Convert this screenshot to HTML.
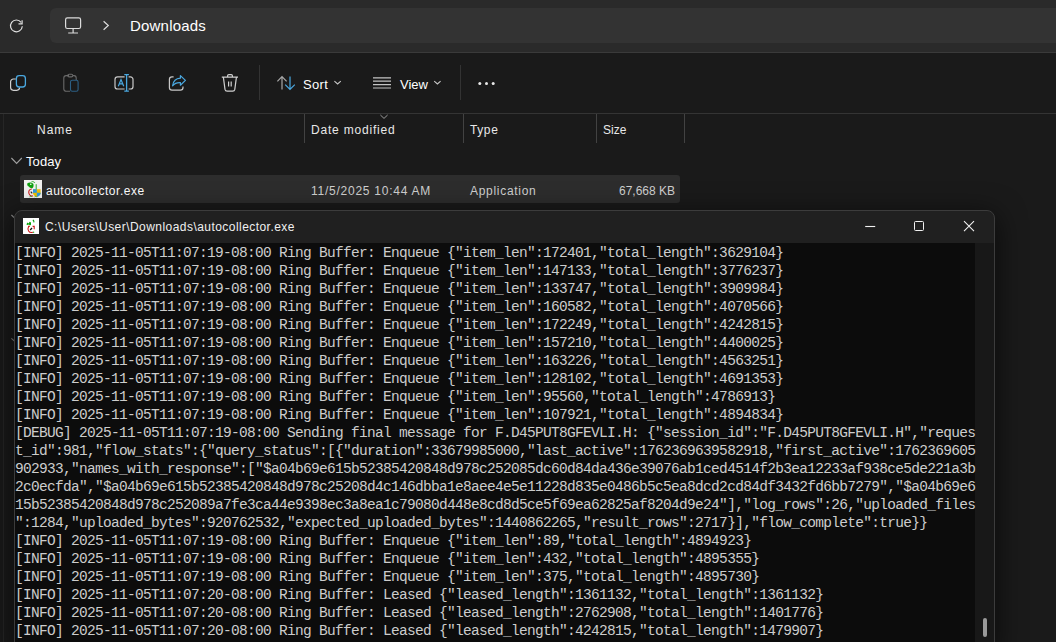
<!DOCTYPE html>
<html><head><meta charset="utf-8">
<style>
*{margin:0;padding:0;box-sizing:border-box}
html,body{width:1056px;height:642px;overflow:hidden;background:#1a1a1a;font-family:"Liberation Sans",sans-serif;color:#fff}
.a{position:absolute}
svg{position:absolute;overflow:visible}
#top{left:0;top:0;width:1056px;height:52px;background:#2a2a2a}
#addr{left:50px;top:8px;width:1020px;height:35px;background:#333333;border-radius:6px}
#topline{left:0;top:52px;width:1056px;height:1px;background:#3a3a3a}
#tb{left:0;top:53px;width:1056px;height:61px;background:#1a1a1a}
.sep{width:1px;background:#333}
.txt{white-space:pre;line-height:1}
#con{left:14px;top:210px;width:981px;height:440px;border:1px solid #3c3c3c;border-radius:8px 8px 0 0;background:#202020;box-shadow:0 6px 28px 2px rgba(0,0,0,.6)}
#cbody{left:15px;top:243px;width:960px;height:400px;background:#0c0c0c}
#cscroll{left:975px;top:243px;width:19px;height:400px;background:#181818}
#thumb{left:983px;top:618px;width:4px;height:19px;background:#9a9a9a;border-radius:2px}
#log{left:15px;top:244px;font-family:"Liberation Mono",monospace;font-size:14.5px;letter-spacing:-0.7px;line-height:18px;color:#cccccc;white-space:pre}
</style></head><body>
<div class="a" id="top"></div>
<div class="a" id="addr"></div>
<div class="a" id="topline"></div>
<div class="a" id="tb"></div>

<!-- refresh icon -->
<svg style="left:0;top:0" width="40" height="50" viewBox="0 0 40 50"><path d="M21.1 22.3 A5.9 5.9 0 1 0 22.3 26.3" fill="none" stroke="#e0e0e0" stroke-width="1.2"/><path d="M22.1 20.3 V23.9 H18.5" fill="none" stroke="#e0e0e0" stroke-width="1.2"/></svg>

<!-- monitor icon + chevron -->
<svg style="left:0;top:0" width="120" height="50" viewBox="0 0 120 50"><rect x="65.6" y="17.9" width="15" height="10.6" rx="1.8" fill="none" stroke="#dcdcdc" stroke-width="1.2"/><path d="M73.1 28.5 V32.4 M68.2 33 H78" fill="none" stroke="#dcdcdc" stroke-width="1.2"/><path d="M103.6 21.2 L108.3 25.5 L103.6 29.8" fill="none" stroke="#dcdcdc" stroke-width="1.2"/></svg>
<div class="a txt" style="left:130px;top:18px;font-size:15px;letter-spacing:0.2px;color:#fff">Downloads</div>

<!-- toolbar icons -->
<svg style="left:0;top:0" width="520" height="110" viewBox="0 0 520 110">
 <!-- copy -->
 <path d="M15.8 79 H13.4 A2.8 2.8 0 0 0 10.6 81.8 V87.6 A2.8 2.8 0 0 0 13.4 90.3 H16.8 A2.8 2.8 0 0 0 19.6 87.6" fill="none" stroke="#d0d0d0" stroke-width="1.2"/>
 <rect x="16.4" y="75.6" width="9" height="11.4" rx="2.8" fill="none" stroke="#4aa8e0" stroke-width="1.3"/>
 <!-- paste disabled -->
 <path d="M69 75.6 H66.2 A2.4 2.4 0 0 0 63.8 78 V89 A2.4 2.4 0 0 0 66.2 91.3 H70 M73 75.6 H74 A2.4 2.4 0 0 1 76.2 78 V80" fill="none" stroke="#6a6a6a" stroke-width="1.1"/>
 <rect x="67.8" y="74.3" width="5" height="2.6" rx="1.3" fill="none" stroke="#6a6a6a" stroke-width="1.1"/>
 <rect x="70.5" y="80.3" width="7.6" height="10.9" rx="1.8" fill="none" stroke="#2c5f84" stroke-width="1.1"/>
 <!-- rename -->
 <path d="M124.6 76.8 H117.6 A2.6 2.6 0 0 0 115 79.4 V86.4 A2.6 2.6 0 0 0 117.6 89 H124.6 M128.6 76.8 H130.4 A2.6 2.6 0 0 1 133 79.4 V86.4 A2.6 2.6 0 0 1 130.4 89 H128.6" fill="none" stroke="#c8c8c8" stroke-width="1.2"/>
 <path d="M118.3 86.2 L121 79.6 L123.7 86.2 M119.3 83.9 H122.7" fill="none" stroke="#4aa8e0" stroke-width="1.2"/>
 <path d="M126.6 74.6 V91.2 M124.3 74.6 H128.9 M124.3 91.2 H128.9" fill="none" stroke="#4aa8e0" stroke-width="1.3"/>
 <!-- share -->
 <path d="M173.6 76.8 H172 A2.6 2.6 0 0 0 169.4 79.4 V87.6 A2.6 2.6 0 0 0 172 90.2 H180.4 A2.6 2.6 0 0 0 183 87.6 V86.6" fill="none" stroke="#c8c8c8" stroke-width="1.2"/>
 <path d="M180.4 75.6 L185.4 80.4 L180.4 85.2 V82.6 C177 82.4 174.6 83.2 172.6 85.8 C173.2 81 175.8 78.4 180.4 78.2 Z" fill="none" stroke="#4aa8e0" stroke-width="1.2" stroke-linejoin="round"/>
 <!-- trash -->
 <path d="M221.8 77.2 H238 M227.6 77 V75.8 A1.2 1.2 0 0 1 228.8 74.6 H231.2 A1.2 1.2 0 0 1 232.4 75.8 V77 M223.4 77.4 L225 89.4 A2.2 2.2 0 0 0 227.2 91.2 H232.6 A2.2 2.2 0 0 0 234.8 89.4 L236.4 77.4 M228.6 81.6 V86.6 M231.2 81.6 V86.6" fill="none" stroke="#d0d0d0" stroke-width="1.2"/>
 <!-- separators -->
 <path d="M259.5 65 V100 M460.5 65 V100" stroke="#333" stroke-width="1"/>
 <!-- sort -->
 <path d="M282 76.6 V89.6 M277.4 81.4 L282 76.6 L286.6 81.4" fill="none" stroke="#a8a8a8" stroke-width="1.2"/>
 <path d="M290 76.4 V89.4 M285.2 84.6 L290 89.4 L294.8 84.6" fill="none" stroke="#4aa8e0" stroke-width="1.2"/>
 <path d="M334.4 81.2 L337.6 84 L340.8 81.2" fill="none" stroke="#c8c8c8" stroke-width="1.1"/>
 <!-- view -->
 <path d="M373 77.8 H391 M373 81.2 H391 M373 84.6 H391 M373 88 H391" stroke="#c4c4c4" stroke-width="1.2"/>
 <path d="M434.2 81.2 L437.4 84 L440.6 81.2" fill="none" stroke="#c8c8c8" stroke-width="1.1"/>
 <!-- dots -->
 <circle cx="479.8" cy="83.6" r="1.5" fill="#e8e8e8"/><circle cx="486.5" cy="83.6" r="1.5" fill="#e8e8e8"/><circle cx="493.2" cy="83.6" r="1.5" fill="#e8e8e8"/>
</svg>
<div class="a txt" style="left:303px;top:78px;font-size:13px;letter-spacing:0.3px">Sort</div>
<div class="a txt" style="left:400px;top:78px;font-size:13px;letter-spacing:0px">View</div>

<!-- column header -->
<div class="a" style="left:0;top:113px;width:1056px;height:1px;background:#343434"></div>
<div class="a" style="left:3px;top:114px;width:1px;height:528px;background:#262626"></div>
<div class="a txt" style="left:37px;top:124px;font-size:12px;letter-spacing:1px;color:#e8e8e8">Name</div>
<div class="a txt" style="left:311px;top:124px;font-size:12px;letter-spacing:0.8px;color:#e8e8e8">Date modified</div>
<div class="a txt" style="left:470px;top:124px;font-size:12px;letter-spacing:0.6px;color:#e8e8e8">Type</div>
<div class="a txt" style="left:603px;top:124px;font-size:12px;letter-spacing:0px;color:#e8e8e8">Size</div>
<svg style="left:0;top:0" width="700" height="150" viewBox="0 0 700 150"><path d="M304.5 114 V143 M463.5 114 V143 M596.5 114 V143 M684.5 114 V143" stroke="#424242" stroke-width="1"/><path d="M380.4 115 L384 118.4 L387.6 115" fill="none" stroke="#9a9a9a" stroke-width="1"/></svg>

<svg style="left:0;top:0" width="40" height="240" viewBox="0 0 40 240"><path d="M11.4 158 L16.6 163.4 L21.8 158" fill="none" stroke="#a0a0a0" stroke-width="1.1"/><path d="M11.4 215 L14 217.5" fill="none" stroke="#8a8a8a" stroke-width="1.1"/><path d="M11.4 338.4 L15 341.6" fill="none" stroke="#8a8a8a" stroke-width="1.1"/></svg>
<div class="a txt" style="left:26px;top:155px;font-size:13px;letter-spacing:0.1px">Today</div>
<div class="a" style="left:20px;top:175px;width:660px;height:28px;background:#2d2d2d;border-radius:3px"></div>
<svg style="left:24px;top:180px" width="18" height="18" viewBox="0 0 18 18"><rect x="0" y="0" width="18" height="18" fill="#f2f2f2"/>
<path d="M3.2 3.4 C5 2.2 7.6 2.2 9.2 3.8 C10 5 9.6 7.6 8.2 8.2 C7 8.4 5.6 7.8 4.8 6.6 C4 6.2 3 5.6 3.2 3.4 Z" fill="#10a010"/>
<circle cx="6.8" cy="4.2" r="0.8" fill="#fff"/>
<path d="M7.6 1.6 C9 1.4 10.4 2 11 3 M12.2 4.2 V9.6" fill="none" stroke="#2fb02f" stroke-width="1"/>
<path d="M7.8 9 C5.2 9 4.2 11.4 5 13.6 C5.8 15.8 7.6 16.6 9 15.8" fill="none" stroke="#d02020" stroke-width="1.1"/>
<path d="M6.8 11.6 L8.2 13.4" stroke="#222" stroke-width="1.1"/>
<path d="M9 9.2 H16.6 V13.2 C16.4 15.4 14.2 16.6 12.8 17 C11.2 16.6 9.4 15.4 9 13.2 Z" fill="#f3c300"/>
<path d="M9 9.2 H12.8 V12.8 H9 Z" fill="#2f9de0"/><path d="M12.8 12.8 H16.6 V13.2 C16.4 15.4 14.2 16.6 12.8 17 Z" fill="#2f9de0"/>
<path d="M5.6 16.8 C6.6 16.2 7.6 16.2 8 16.8 M10.6 16.8 C11.2 16.2 12 16.2 12.6 16.8" fill="none" stroke="#32b432" stroke-width="1"/>
</svg>
<div class="a txt" style="left:46px;top:185px;font-size:12px;letter-spacing:0.5px">autocollector.exe</div>
<div class="a txt" style="left:311px;top:185px;font-size:12px;letter-spacing:0.75px;color:#d0d0d0">11/5/2025 10:44 AM</div>
<div class="a txt" style="left:470px;top:185px;font-size:12px;letter-spacing:0.7px;color:#d0d0d0">Application</div>
<div class="a txt" style="left:619px;top:185px;font-size:12px;color:#d0d0d0">67,668 KB</div>

<!-- console -->
<div class="a" id="con"></div>
<div class="a" id="cbody"></div>
<div class="a" id="cscroll"></div>
<div class="a" id="thumb"></div>
<svg style="left:23px;top:218px" width="16" height="16" viewBox="0 0 16 16"><rect x="0" y="0" width="16" height="16" fill="#fff"/>
<path d="M3.4 6.4 L4.4 4.6 L5.6 5.6 L6.6 3.8 L8 4.4 V6.8 L7 7.6 L5.8 6.4 L4.6 7 Z" fill="#0aa30a"/>
<path d="M9.8 1.8 L10.6 2.6 L11 4.4" fill="none" stroke="#0aa30a" stroke-width="1.1"/>
<path d="M6.8 8.4 H5.6 C5 9.6 4.8 11.8 5.6 13 C6.4 14.4 8 14.8 9.8 14.4 M9.6 8.4 H11.2 V11.2" fill="none" stroke="#d01818" stroke-width="1.1"/>
<path d="M7.2 12 L9 10" stroke="#111" stroke-width="1.3"/>
<circle cx="10.6" cy="14.2" r="0.7" fill="#2bb32b"/>
</svg>
<div class="a txt" style="left:45px;top:221px;font-size:12px;letter-spacing:0.45px;color:#f0f0f0">C:\Users\User\Downloads\autocollector.exe</div>
<svg style="left:0;top:0" width="1000" height="250" viewBox="0 0 1000 250"><path d="M865.2 226.5 H875.2" stroke="#f0f0f0" stroke-width="1.1"/><rect x="914.5" y="221.5" width="9" height="9" rx="1" fill="none" stroke="#f0f0f0" stroke-width="1"/><path d="M964 221.2 L974 231.2 M974 221.2 L964 231.2" stroke="#f0f0f0" stroke-width="1.1"/></svg>
<div class="a" id="log">[INFO] 2025-11-05T11:07:19-08:00 Ring Buffer: Enqueue {"item_len":172401,"total_length":3629104}
[INFO] 2025-11-05T11:07:19-08:00 Ring Buffer: Enqueue {"item_len":147133,"total_length":3776237}
[INFO] 2025-11-05T11:07:19-08:00 Ring Buffer: Enqueue {"item_len":133747,"total_length":3909984}
[INFO] 2025-11-05T11:07:19-08:00 Ring Buffer: Enqueue {"item_len":160582,"total_length":4070566}
[INFO] 2025-11-05T11:07:19-08:00 Ring Buffer: Enqueue {"item_len":172249,"total_length":4242815}
[INFO] 2025-11-05T11:07:19-08:00 Ring Buffer: Enqueue {"item_len":157210,"total_length":4400025}
[INFO] 2025-11-05T11:07:19-08:00 Ring Buffer: Enqueue {"item_len":163226,"total_length":4563251}
[INFO] 2025-11-05T11:07:19-08:00 Ring Buffer: Enqueue {"item_len":128102,"total_length":4691353}
[INFO] 2025-11-05T11:07:19-08:00 Ring Buffer: Enqueue {"item_len":95560,"total_length":4786913}
[INFO] 2025-11-05T11:07:19-08:00 Ring Buffer: Enqueue {"item_len":107921,"total_length":4894834}
[DEBUG] 2025-11-05T11:07:19-08:00 Sending final message for F.D45PUT8GFEVLI.H: {"session_id":"F.D45PUT8GFEVLI.H","reques
t_id":981,"flow_stats":{"query_status":[{"duration":33679985000,"last_active":1762369639582918,"first_active":1762369605
902933,"names_with_response":["$a04b69e615b52385420848d978c252085dc60d84da436e39076ab1ced4514f2b3ea12233af938ce5de221a3b
2c0ecfda","$a04b69e615b52385420848d978c25208d4c146dbba1e8aee4e5e11228d835e0486b5c5ea8dcd2cd84df3432fd6bb7279","$a04b69e6
15b52385420848d978c252089a7fe3ca44e9398ec3a8ea1c79080d448e8cd8d5ce5f69ea62825af8204d9e24"],"log_rows":26,"uploaded_files
":1284,"uploaded_bytes":920762532,"expected_uploaded_bytes":1440862265,"result_rows":2717}],"flow_complete":true}}
[INFO] 2025-11-05T11:07:19-08:00 Ring Buffer: Enqueue {"item_len":89,"total_length":4894923}
[INFO] 2025-11-05T11:07:19-08:00 Ring Buffer: Enqueue {"item_len":432,"total_length":4895355}
[INFO] 2025-11-05T11:07:19-08:00 Ring Buffer: Enqueue {"item_len":375,"total_length":4895730}
[INFO] 2025-11-05T11:07:20-08:00 Ring Buffer: Leased {"leased_length":1361132,"total_length":1361132}
[INFO] 2025-11-05T11:07:20-08:00 Ring Buffer: Leased {"leased_length":2762908,"total_length":1401776}
[INFO] 2025-11-05T11:07:20-08:00 Ring Buffer: Leased {"leased_length":4242815,"total_length":1479907}</div>
</body></html>
